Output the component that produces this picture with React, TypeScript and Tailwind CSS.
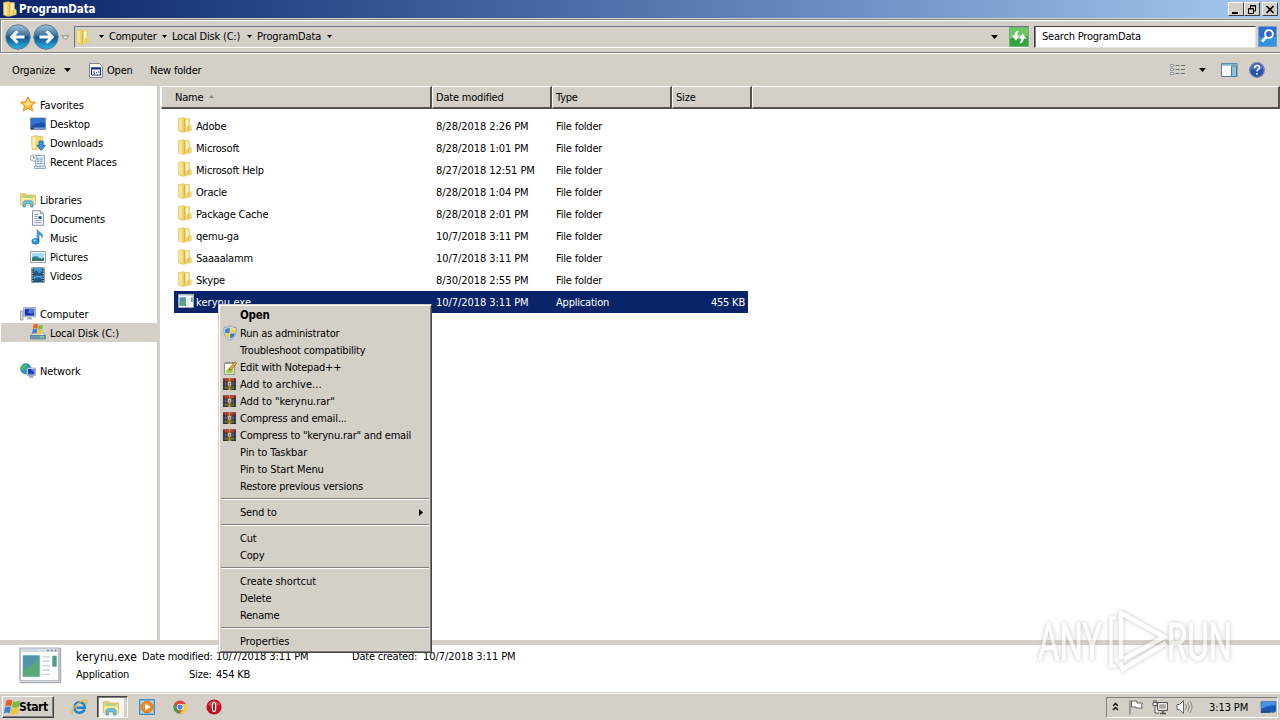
import type { ReactNode } from 'react';

type IconProps = { className?: string };

const Svg = ({ w = 16, h = 16, className = '', children }: { w?: number; h?: number; className?: string; children: ReactNode }) => (
  <svg width={w} height={h} viewBox="0 0 16 16" preserveAspectRatio="none" className={`block shrink-0 ${className}`}>
    {children}
  </svg>
);

const Folder = ({ className = '' }: IconProps) => (
  <Svg className={className}>
    <path d="M1.500 1.500L7 .600l.8.900V15L6 15.500 1.500 14z" fill="#f0d468" stroke="#dcc06a" strokeWidth=".5" />
    <path d="M7 1.500h5.500v6L14.300 9v4.500L8 15.200 6.800 14z" fill="#efd774" stroke="#dcc06a" strokeWidth=".5" />
    <path d="M2.300 2.200l2.500-.5V14l-2.500-.8z" fill="#f8e89c" />
    <path d="M9 2.500h2.300v6L9 10.500z" fill="#fcf6cd" />
    <path d="M7.500 2v12.500" stroke="#d1ae48" strokeWidth=".8" />
    <path d="M11.500 9v4.500" stroke="#dfbe57" strokeWidth="1.200" />
  </Svg>
);

const Star = () => (
  <Svg className="mb-[2px]">
    <path d="M8 .8l2.200 4.900 5.300.5-4 3.500 1.200 5.300L8 12.300 3.300 15l1.200-5.300-4-3.500 5.300-.5z" fill="#ffb92e" stroke="#e08a1e" strokeWidth=".9" />
    <path d="M8 3.500l1.300 3.300 3 .5-2.300 2L8 10 5 9 3.500 7.300l3-.4z" fill="#ffe58c" />
  </Svg>
);

const Desktop = () => (
  <Svg>
    <path d="M.5 2h15v11.500H.5z" fill="#1b4fae" stroke="#6f88ad" strokeWidth=".8" />
    <path d="M1 2.500h14V7Q8 5 1 10z" fill="#3273cf" />
    <path d="M1 11.500h14v1.700H1z" fill="#7f9fc4" />
    <path d="M1 11.500h3v1.700H1z" fill="#2b3f63" />
  </Svg>
);

const Downloads = () => (
  <Svg>
    <path d="M1.500 1.500L7 .5l.8 1h4.500V14L2 14.500z" fill="#f2d878" stroke="#d3b14e" strokeWidth=".6" />
    <path d="M2.500 2.500l2.500-.5v11.500l-2.500-.3z" fill="#fbf0b8" />
    <path d="M9 6h4.200v4.300h2.300L11.200 15.500 6.800 10.300H9z" fill="#3a94dd" stroke="#1c5ea6" strokeWidth=".7" />
  </Svg>
);

const Recent = () => (
  <Svg>
    <path d="M5 1.500h9.500v10.500H15.500v2.500H4.500V12H6z" fill="#dce8f3" stroke="#8498ad" strokeWidth=".8" />
    <path d="M7 5h6M7 7.300h6M7 9.500h6" stroke="#6e94bd" strokeWidth="1" strokeDasharray="2 .7" />
    <circle cx="3.600" cy="4" r="3.200" fill="#f5f8fa" stroke="#8494a4" strokeWidth=".8" />
    <path d="M3.600 2v2.200h1.600" fill="none" stroke="#506478" strokeWidth=".7" />
    <path d="M6 12.500h8" stroke="#8498ad" strokeWidth=".8" />
  </Svg>
);

const Library = ({ className = '', w = 16, h = 16 }: IconProps & { w?: number; h?: number }) => (
  <Svg className={className} w={w} h={h}>
    <path d="M.6 1.800h5.500l1 1.300h8.300V13H.6z" fill="#eed26a" stroke="#cfac49" strokeWidth=".7" />
    <path d="M3 3h4l1 1h5v2H3z" fill="#a9d68d" />
    <path d="M1 6h14v7H1z" fill="#f9e798" />
    <path d="M3 15v-4.500l1.500-1.700h7l1.500 1.700V15h-2.300v-3.300H5.300V15z" fill="#73c2ea" stroke="#3688bd" strokeWidth=".7" />
  </Svg>
);

const Doc = () => (
  <Svg className="mb-px">
    <path d="M2.500.700h8l3 3v11.600h-11z" fill="#f7fafd" stroke="#7288a0" strokeWidth=".9" />
    <path d="M10.500.700v3h3" fill="#d5e1ee" stroke="#7288a0" strokeWidth=".8" />
    <path d="M4.500 4.500h4M4.500 6.500h3M4.500 8.500h3M4.500 10.700h7M4.500 12.700h7" stroke="#7b95b1" strokeWidth=".9" />
    <path d="M8.500 6.200h3.200v2.800H8.500z" fill="#29578f" />
  </Svg>
);

const Music = () => (
  <Svg className="mb-px">
    <path d="M7.200.500c1 2.700 6.600 3.500 5 8.300-.4-2-1.600-3-3.200-3.300V12H7.200z" fill="#3da7e4" stroke="#1775b5" strokeWidth=".6" />
    <ellipse cx="5.500" cy="12.300" rx="3.700" ry="2.900" fill="#2d95d9" stroke="#1668a5" strokeWidth=".6" />
    <ellipse cx="4.700" cy="11.500" rx="1.500" ry="1" fill="#98d7f6" />
  </Svg>
);

const Pictures = () => (
  <Svg>
    <path d="M.6 2.500h14.800v11H.6z" fill="#fff" stroke="#7e929f" strokeWidth=".9" />
    <path d="M2 4h12v8H2z" fill="#a3dbf5" />
    <path d="M2 8.500q4-2.500 7 0t5-.500v4H2z" fill="#2d8292" />
    <path d="M2 10.500h12V12H2z" fill="#3f6d4e" />
  </Svg>
);

const Videos = () => (
  <Svg className="mb-px">
    <path d="M1.500.500h13v15h-13z" fill="#2c3946" />
    <path d="M4 1h8v6.300H4zM4 8.500h8V15H4z" fill="#3e9ad6" />
    <path d="M4 5q3-3 4 0t4-1v3.300H4zM4 12.500q4-4 8 0V15H4z" fill="#195a8c" />
    <path d="M2.800 1v14M13.200 1v14" stroke="#e8eef2" strokeWidth="1.100" strokeDasharray="1.200 1.200" />
  </Svg>
);

const Computer = () => (
  <Svg>
    <path d="M.5 5h2.500v9H.5z" fill="#d4dae1" stroke="#79869a" strokeWidth=".7" />
    <path d="M3.500 1.500h12v9.300h-12z" fill="#dce4ed" stroke="#8f9cae" strokeWidth=".8" />
    <path d="M4.700 2.700h9.600v7H4.700z" fill="#1b36ad" />
    <path d="M9 2.700h5.300v4Q11 8 8 7z" fill="#4d77df" />
    <path d="M8 11h3l1.500 2.500h-6z" fill="#aab5c2" />
  </Svg>
);

const Drive = () => (
  <Svg className="mb-px">
    <path d="M3 8h10l2.500 3.500H.5z" fill="#d5dde2" stroke="#78909b" strokeWidth=".6" />
    <path d="M.5 11.500h15V15H.5z" fill="#6a99a9" stroke="#496f7d" strokeWidth=".6" />
    <path d="M10 13h4" stroke="#8df08b" strokeWidth="1" />
    <path d="M3.500.700q2.300-1.500 4.500 0L7.300 4.800q-2.300-1.200-4.500 0z" fill="#ee6131" />
    <path d="M8.500 1q2.300 1 4.500-.2L12.200 4.900q-2.300 1.200-4.500.3z" fill="#83bd38" />
    <path d="M2.700 5.400q2.300-1.300 4.500 0L6.500 9.800q-2.300-1.300-4.500 0z" fill="#3f82d7" />
    <path d="M7.600 5.900q2.300 1 4.500-.3l-.8 4.200q-2.200 1.200-4.400.2z" fill="#f8c72f" />
  </Svg>
);

const Network = () => (
  <Svg>
    <circle cx="5.800" cy="5.800" r="5.300" fill="#2d8fd6" stroke="#2468a3" strokeWidth=".5" />
    <path d="M2 2.500q3-2.300 5 0L5 6 3 7.500.8 6zM5 8l3 1-1.500 2z" fill="#4cbd54" />
    <path d="M7 5h8.500v7.500H7z" fill="#dde5ee" stroke="#8797ab" strokeWidth=".7" />
    <path d="M8 6h6.500v5.500H8z" fill="#1d3fba" />
    <path d="M11 6h3.500v4z" fill="#6c97ef" />
    <path d="M10 12.500h2.500l1.500 2.200H8.500z" fill="#93a5bd" />
  </Svg>
);

const AppWindow = ({ w = 16, h = 14, className = '' }: IconProps & { w?: number; h?: number }) => (
  <Svg w={w} h={h} className={className}>
    <path d="M.4.500h15.200v15H.4z" fill="#fbfcfc" stroke="#a9b1b9" strokeWidth=".6" />
    <path d="M.7.800h14.600v1.500H.7z" fill="#d3dbe2" />
    <path d="M11 1.600h.6M12.500 1.600h.6M14 1.600h.6" stroke="#6b7c8c" strokeWidth=".6" />
    <path d="M1.500 3.800h6.500v9.700H1.500z" fill="#5593ad" />
    <path d="M1.500 10q4-.5 6.500-6v9.500H1.500z" fill="#58a878" />
    <path d="M9.300 4.500h2.700M9.300 6.500h2.700M9.300 8.500h2.700M9.300 10.500h2.700M9.300 12.500h2.700" stroke="#c9d1d6" strokeWidth=".6" />
    <path d="M13 4h1.700v5H13z" fill="#4f9b84" />
  </Svg>
);

const Shield = () => (
  <Svg w={14} h={16}>
    <path d="M8 .7Q5 2.600 1 2.600 0 12 8 15.500 16 12 15 2.600 11 2.600 8 .700z" fill="#d3e4f5" stroke="#7893b3" strokeWidth=".8" />
    <path d="M7.700 2.300Q5 4 2.500 4v4h5.200z" fill="#3b82d1" />
    <path d="M8.300 2.300Q11 4 13.500 4v4H8.300z" fill="#fbd044" />
    <path d="M2.500 8.400h5.200v5.300Q3 11.500 2.500 8.400z" fill="#f9cb38" />
    <path d="M13.500 8.400H8.300v5.300Q13 11.500 13.500 8.400z" fill="#3277c8" />
  </Svg>
);

const Notepad = () => (
  <Svg w={13} h={14}>
    <path d="M.7 2.500h12v12.800h-12z" fill="#fffef2" stroke="#6d7668" strokeWidth=".9" />
    <path d="M2 2h10" stroke="#666" strokeWidth="1.500" strokeDasharray="1 1" />
    <path d="M2.500 11l4-4 4.500 2v5H2.500z" fill="#a9d14b" />
    <path d="M13.500.800l2 1.700L9 10l-2.500 1 .700-2.700z" fill="#f2bb2f" stroke="#65511c" strokeWidth=".8" />
  </Svg>
);

const WinRar = () => (
  <Svg w={13} h={12} className="mr-px mb-px">
    <path d="M0 .3h16v5.200H0z" fill="#a8283f" />
    <path d="M0 5.500h16v5H0z" fill="#2c4fa0" />
    <path d="M0 10.500h16v5.200H0z" fill="#1f7a40" />
    <path d="M0 5.300h16M0 10.500h16M0 15.500h16" stroke="#14202b" strokeWidth="1.200" />
    <path d="M1 1v4M14.500 1v4M1 6v4M14.500 6v4M1 11v4M14.500 11v4" stroke="#26303a" strokeWidth="1.200" />
    <path d="M3.200 1v4M12.500 1v4M3.200 6v4M12.500 6v4M3.200 11v4M12.500 11v4" stroke="#cf5348" strokeWidth=".9" />
    <path d="M5.500 0h5v16h-5z" fill="#a4602a" />
    <path d="M5.500 5h5v5.500h-5z" fill="#f0e4b6" stroke="#453019" strokeWidth=".8" />
    <path d="M7 6.500h2.200V9H7z" fill="#7d7260" />
    <path d="M8 0v5M8 11v5" stroke="#e9c157" strokeWidth="1.300" strokeDasharray="1 1" />
  </Svg>
);

const Flag4 = () => (
  <Svg w={18} h={17}>
    <path d="M3 1.500q2.700-1.800 5.200 0L7.200 7q-2.500-1.700-5.200 0z" fill="#ea5a2c" />
    <path d="M8.900 2q2.700 1.500 6.400-.5L14 7.200q-3 1.800-6.100.4z" fill="#7dba35" />
    <path d="M1.800 7.900q2.700-1.700 5.200 0l-1 5.700q-2.500-1.700-5.200 0z" fill="#3d83da" />
    <path d="M7.700 8.400q3 1.500 6.100-.3L12.500 13.700q-2.800 1.800-5.800.4z" fill="#f8c42c" />
  </Svg>
);

const NavOrb = ({ flip = false }: { flip?: boolean }) => (
  <svg width="26" height="26" viewBox="0 0 26 26" className={`mt-[2px] block shrink-0 ${flip ? '-scale-x-100' : ''}`}>
    <defs>
      <linearGradient id={flip ? 'orbF' : 'orbB'} x1="0" y1="0" x2="0" y2="1">
        <stop offset="0" stopColor="#a4bfd2" />
        <stop offset=".42" stopColor="#3b78a3" />
        <stop offset=".5" stopColor="#0f5388" />
        <stop offset="1" stopColor="#2db4ea" />
      </linearGradient>
    </defs>
    <circle cx="13" cy="13" r="12.200" fill={flip ? 'url(#orbF)' : 'url(#orbB)'} stroke="#587d97" strokeWidth="1" />
    <path d="M12.500 7.300L6.800 13l5.700 5.700M7 13h12.500" fill="none" stroke="#fff" strokeWidth="2.900" />
  </svg>
);

const Down = ({ className = '' }: IconProps) => (
  <svg width="7" height="4" viewBox="0 0 7 4" className={`block shrink-0 ${className}`}>
    <path d="M0 0h7L3.500 4z" fill="#000" />
  </svg>
);

const TinyDown = ({ className = '' }: IconProps) => (
  <svg width="5" height="3" viewBox="0 0 5 3" className={`block shrink-0 ${className}`}>
    <path d="M0 0h5L2.500 3z" fill="#000" />
  </svg>
);

const navGroups: { label: string; icon: ReactNode; items: { label: string; icon: ReactNode; active?: boolean }[] }[] = [
  {
    label: 'Favorites',
    icon: <Star />,
    items: [
      { label: 'Desktop', icon: <Desktop /> },
      { label: 'Downloads', icon: <Downloads /> },
      { label: 'Recent Places', icon: <Recent /> },
    ],
  },
  {
    label: 'Libraries',
    icon: <Library />,
    items: [
      { label: 'Documents', icon: <Doc /> },
      { label: 'Music', icon: <Music /> },
      { label: 'Pictures', icon: <Pictures /> },
      { label: 'Videos', icon: <Videos /> },
    ],
  },
  { label: 'Computer', icon: <Computer />, items: [{ label: 'Local Disk (C:)', icon: <Drive />, active: true }] },
  { label: 'Network', icon: <Network />, items: [] },
];

const files = [
  ['Adobe', '8/28/2018 2:26 PM'],
  ['Microsoft', '8/28/2018 1:01 PM'],
  ['Microsoft Help', '8/27/2018 12:51 PM'],
  ['Oracle', '8/28/2018 1:04 PM'],
  ['Package Cache', '8/28/2018 2:01 PM'],
  ['qemu-ga', '10/7/2018 3:11 PM'],
  ['Saaaalamm', '10/7/2018 3:11 PM'],
  ['Skype', '8/30/2018 2:55 PM'],
];

const Caption = ({ children }: { children: ReactNode }) => (
  <div className="flex h-[14px] w-4 items-center justify-center border border-t-white border-r-[#404040] border-b-[#404040] border-l-white bg-[#d4d0c8]">
    {children}
  </div>
);

const TitleBar = () => (
  <div className="flex h-[18px] shrink-0 items-center bg-linear-to-r from-[#0a246a] to-[#a6caf0] pr-[2px] pl-[2px]">
    <Folder />
    <span className="ml-px grow text-[11.5px] font-bold tracking-[-0.1px] text-white">ProgramData</span>
    <div className="flex">
      <Caption>
        <svg width="10" height="9"><path d="M1 8h6" stroke="#000" strokeWidth="2" /></svg>
      </Caption>
      <Caption>
        <svg width="10" height="9"><path d="M3.500 3V.500h5V6H6.500M3 1h6M1.500 3.500h5v5h-5zM1 4h6" fill="none" stroke="#000" /></svg>
      </Caption>
      <div className="w-[2px]" />
      <Caption>
        <svg width="10" height="9"><path d="M1.500 1l7 7M8.500 1l-7 7" stroke="#000" strokeWidth="1.600" /></svg>
      </Caption>
    </div>
  </div>
);

const AddressBar = () => (
  <div className="flex h-[36px] shrink-0 flex-col pt-px">
    <div className="flex h-[34px] items-center border-t border-b border-l border-[#808080] pl-[4px] shadow-[inset_1px_1px_0_#fff,0_1px_0_#fff]">
      <NavOrb />
      <div className="w-[2px]" />
      <NavOrb flip />
      <svg width="9" height="6" className="mt-[3px] mr-[4px] ml-[2px] block shrink-0"><path d="M.8.800h7L4.300 4.800z" fill="#eee" stroke="#8c8c80" /></svg>
      <div className="mt-px flex h-[22px] grow items-center border-t border-b border-l border-t-[#697580] border-b-white border-l-[#697580] [&>span]:pt-px">
        <Folder />
        <TinyDown className="mr-[5px] ml-[8px]" />
        <span className="w-[47px]">Computer</span>
        <TinyDown className="mr-[5px] ml-[6px]" />
        <span className="w-[69px]">Local Disk (C:)</span>
        <TinyDown className="mr-[5px] ml-[6px]" />
        <span className="w-[63px] tracking-[-0.1px]">ProgramData</span>
        <TinyDown className="ml-[7px]" />
        <div className="grow" />
        <Down className="mr-[11px]" />
        <svg width="20" height="20" viewBox="0 0 20 20" className="block shrink-0">
          <path d="M.5.500h19v19H.5z" fill="#2fa53a" stroke="#7cad7c" />
          <path d="M1 1h18v8Q9 8 1 12z" fill="#69c764" />
          <path d="M10 4Q6 3.500 5.300 8.500H2.500l4.500 5 4-5H8.200Q8 5.500 10 4z" fill="#fff" />
          <path d="M10.500 16.500q4-.5 4.300-5h2.900l-4.200-5-4.200 5H12q.2 3-1.500 5z" fill="#fff" />
        </svg>
      </div>
      <div className="mt-px ml-[5px] flex h-[22px] w-[222px] items-center border border-t-[#404040] border-r-[#e5e2dc] border-b-[#e5e2dc] border-l-[#404040] bg-white pl-[7px] shadow-[inset_1px_0_0_#808080]">
        <span className="pt-px">Search ProgramData</span>
      </div>
      <svg width="19" height="21" viewBox="0 0 19 21" className="mt-px mr-[3px] ml-[2px] block shrink-0">
        <path d="M.5.500h18v20H.5z" fill="#2f6cd2" stroke="#7c9cc8" />
        <path d="M1 11h17v9H1z" fill="#36a2e4" opacity=".7" />
        <path d="M8.800 10.500L4 15.500" stroke="#fff" strokeWidth="2.600" />
        <circle cx="11" cy="8" r="3.900" fill="#3c62c4" stroke="#fff" strokeWidth="1.900" />
      </svg>
    </div>
  </div>
);

const CommandBar = () => (
  <div className="flex h-8 shrink-0 items-center pl-[12px] [&>span]:pt-[2px]">
    <span className="w-[44px] tracking-[-0.15px]">Organize</span>
    <Down className="mr-[18px] ml-2" />
    <svg width="14" height="15" viewBox="0 0 14 15" className="mr-1 block shrink-0">
      <path d="M.5.500h10l3 3v11H.5z" fill="#f8fafd" stroke="#7c8796" />
      <path d="M2.500 5h9v7h-9z" fill="#fff" stroke="#1a2d87" />
      <path d="M2 5.500h10" stroke="#1a2d87" strokeWidth="2" />
      <path d="M4 9h2M7 9.500h1M9 9h1.500M5 10.500h1" stroke="#1a2d87" />
    </svg>
    <span className="w-[43px]">Open</span>
    <span>New folder</span>
    <div className="grow" />
    <svg width="16" height="12" viewBox="0 0 16 12" className="block shrink-0">
      <path d="M.5.500h3v2h-3zM.5 4.500h3v2h-3zM.5 8.500h3v2h-3z" fill="#fff" stroke="#8793a0" strokeWidth=".9" />
      <path d="M5.500 1.500h4M11 1.500h4M5.500 5.500h4M11 5.500h4M5.500 9.500h4M11 9.500h4" stroke="#69737d" />
    </svg>
    <Down className="mr-[15px] ml-[13px]" />
    <svg width="17" height="14" viewBox="0 0 17 14" className="mr-[11px] block shrink-0">
      <path d="M.5.500h15.500v13H.5z" fill="#fff" stroke="#507c9c" />
      <path d="M1 1.700h15" stroke="#7eb4d1" strokeWidth="2" />
      <path d="M10.500 3h5v10.500h-5z" fill="#88c5e1" stroke="#507c9c" />
    </svg>
    <svg width="16" height="16" viewBox="0 0 16 16" className="mr-[15px] block shrink-0">
      <circle cx="8" cy="8" r="7.300" fill="#2750b4" stroke="#7085ad" strokeWidth="1.300" />
      <path d="M2 7a6 5 0 0 1 12 0Q8 9 2 7z" fill="#688be0" opacity=".6" />
      <path d="M5.600 6q.2-2.500 2.500-2.500T10.500 5.700Q10.500 7 9 7.600 8 8.200 8 9.500M8 10.900v1.900" fill="none" stroke="#fff" strokeWidth="1.600" />
    </svg>
  </div>
);

const Sidebar = () => (
  <div className="flex w-[157px] shrink-0 flex-col gap-[19px] pt-[9px]">
    {navGroups.map((g) => (
      <div key={g.label}>
        <div className="flex h-[19px] items-center pl-[20px]">
          {g.icon}
          <span className="ml-1 pt-[2px] tracking-[-0.1px]">{g.label}</span>
        </div>
        {g.items.map((i) => (
          <div key={i.label} className={`ml-px flex h-[19px] items-center pl-[29px] ${i.active ? 'bg-[#d4d0c8]' : ''}`}>
            {i.icon}
            <span className="ml-1 pt-[2px] tracking-[-0.15px]">{i.label}</span>
          </div>
        ))}
      </div>
    ))}
  </div>
);

const Head = ({ className, children }: { className: string; children?: ReactNode }) => (
  <div className={`flex items-center border-t border-r-2 border-b-2 border-l border-t-white border-r-[#55534f] border-b-[#55534f] border-l-white bg-[#d4d0c8] pt-[2px] ${className}`}>
    {children}
  </div>
);

const FileList = () => (
  <div className="flex grow flex-col pl-px">
    <div className="flex h-[23px] shrink-0">
      <Head className="w-[271px] pl-[13px]">
        Name
        <svg width="5" height="3" className="mb-[4px] ml-[6px] block"><path d="M0 3h5L2.500 0z" fill="#85827c" /></svg>
      </Head>
      <Head className="w-[120px] pl-[3px]">Date modified</Head>
      <Head className="w-[120px] pl-[3px]">Type</Head>
      <Head className="w-[80px] pl-[3px]">Size</Head>
      <Head className="grow" />
    </div>
    <div className="mt-[6px] ml-[13px] flex w-[574px] flex-col">
      {files.map(([name, date]) => (
        <div key={name} className="flex h-[22px] items-center pl-[3px] [&>span]:pt-[2px]">
          <Folder className="mb-[2px]" />
          <span className="ml-[3px] w-[240px]">{name}</span>
          <span className="w-[120px] tracking-[-0.07px]">{date}</span>
          <span>File folder</span>
        </div>
      ))}
      <div className="flex h-[22px] items-center bg-[#0a246a] pr-[3px] pl-1 text-white [&>span]:pt-[2px]">
        <AppWindow className="mb-[2px]" />
        <span className="ml-[2px] w-[240px] tracking-[0.05px]">kerynu.exe</span>
        <span className="w-[120px] tracking-[-0.07px]">10/7/2018 3:11 PM</span>
        <span className="grow">Application</span>
        <span>455 KB</span>
      </div>
    </div>
  </div>
);

const Item = ({ icon, children, tall }: { icon?: ReactNode; children: ReactNode; tall?: boolean }) => (
  <div className={`flex items-center ${tall ? 'h-[18px]' : 'h-[17px]'}`}>
    <div className="flex w-[20px] shrink-0 justify-center">{icon}</div>
    {children}
  </div>
);

const Rule = () => <div className="mt-[3px] mr-[2px] mb-1 ml-px h-[2px] border-t border-b border-t-[#808080] border-b-white" />;

const ContextMenu = () => (
  <div className="absolute top-[304px] left-[218px] h-[349px] w-[214px] border border-t-[#d4d0c8] border-r-[#404040] border-b-[#404040] border-l-[#d4d0c8] bg-[#d4d0c8] pt-px pl-px shadow-[inset_1px_1px_0_#fff,inset_-1px_-1px_0_#808080]">
    <Item tall><span className="text-[11.500px] font-bold">Open</span></Item>
    <Item tall icon={<Shield />}><span className="pt-px">Run as administrator</span></Item>
    <Item>Troubleshoot compatibility</Item>
    <Item icon={<Notepad />}>Edit with Notepad++</Item>
    <Item icon={<WinRar />}><span className="tracking-[0.03px]">Add to archive...</span></Item>
    <Item icon={<WinRar />}><span className="tracking-[-0.05px]">Add to "kerynu.rar"</span></Item>
    <Item icon={<WinRar />}>Compress and email...</Item>
    <Item icon={<WinRar />}>Compress to "kerynu.rar" and email</Item>
    <Item><span className="tracking-[-0.1px]">Pin to Taskbar</span></Item>
    <Item><span className="tracking-[-0.1px]">Pin to Start Menu</span></Item>
    <Item><span className="tracking-[-0.18px]">Restore previous versions</span></Item>
    <Rule />
    <Item>
      <span className="grow">Send to</span>
      <svg width="4" height="7" className="mr-[8px] block"><path d="M0 0v7l4-3.500z" /></svg>
    </Item>
    <Rule />
    <Item>Cut</Item>
    <Item>Copy</Item>
    <Rule />
    <Item><span className="tracking-[-0.07px]">Create shortcut</span></Item>
    <Item>Delete</Item>
    <Item>Rename</Item>
    <Rule />
    <Item><span className="tracking-[-0.05px]">Properties</span></Item>
  </div>
);

const Details = () => (
  <div className="box-content flex h-[47px] shrink-0 border-t-[5px] border-[#d4d0c8] bg-white pl-[19px]">
    <AppWindow w={41} h={35} className="mt-[2px] shadow-[1px_1px_1px_#aaa]" />
    <div className="flex flex-col pt-[3px] pl-[16px]">
      <div className="flex h-[18px] items-center">
        <span className="w-[66px] text-[12px] tracking-[0.15px]">kerynu.exe</span>
        <span className="w-[74px]">Date modified:</span>
        <span className="w-[136px] tracking-[-0.07px]">10/7/2018 3:11 PM</span>
        <span className="w-[71px]">Date created:</span>
        <span className="tracking-[-0.07px]">10/7/2018 3:11 PM</span>
      </div>
      <div className="flex h-[18px] items-center">
        <span className="w-[113px]">Application</span>
        <span className="w-[27px]">Size:</span>
        <span>454 KB</span>
      </div>
    </div>
  </div>
);

const Taskbar = () => (
  <div className="flex h-[28px] shrink-0 items-center border-t border-[#d4d0c8] pt-px shadow-[inset_0_1px_0_#fff]">
    <div className="ml-[2px] flex h-[22px] w-[52px] items-center border border-t-white border-r-[#404040] border-b-[#404040] border-l-white shadow-[inset_-1px_-1px_0_#808080]">
      <Flag4 />
      <span className="-ml-[2px] text-[12px] font-bold tracking-[-0.4px]">Start</span>
    </div>
    <svg width="17" height="16" viewBox="0 0 17 16" className="mr-[9px] ml-[17px] block shrink-0">
      <path d="M13.500 10.500Q12 13.700 8.500 13.700 3.500 13.500 3.500 8.500 4 3.500 8.500 3.300 13.600 3.500 13.700 8.700H5.500" fill="none" stroke="#1f83d0" strokeWidth="2.500" />
      <path d="M1.500 15Q-.5 12 5 6.500 12 .200 15.500 1.200q1.300 1-.8 4.300" fill="none" stroke="#e5b82d" strokeWidth="1.400" />
    </svg>
    <div className="flex h-[22px] w-[31px] items-center justify-center border border-t-[#404040] border-r-white border-b-white border-l-[#404040] bg-[#f6f5f2] shadow-[inset_1px_1px_0_#808080,inset_-3px_0_0_#d4d0c8]">
      <Library className="mt-[2px] mr-[3px]" />
    </div>
    <svg width="16" height="16" viewBox="0 0 16 16" className="ml-[11px] block shrink-0">
      <path d="M.5.500h15v15H.5z" fill="#83b8dc" stroke="#5288b8" />
      <path d="M2 2h12v12H2z" fill="#b7d8ec" />
      <circle cx="8" cy="8" r="5.700" fill="#f28a1c" stroke="#db6f0e" />
      <path d="M6 4.500l5.500 3.500L6 11.500z" fill="#fff" />
    </svg>
    <svg width="14" height="14" viewBox="0 0 16 16" className="mr-px ml-[18px] block shrink-0">
      <circle cx="8" cy="8" r="7.500" fill="#e54535" />
      <path d="M1.500 4.300L5 11l3 4.500A7.500 7.500 0 0 1 1.500 4.300z" fill="#35a553" />
      <path d="M8 15.500L11.200 9.500 9 4.500h6.500A7.500 7.500 0 0 1 8 15.500z" fill="#f9cb38" />
      <circle cx="8" cy="8" r="3.700" fill="#fff" />
      <circle cx="8" cy="8" r="2.900" fill="#4386ee" />
    </svg>
    <svg width="16" height="16" viewBox="0 0 16 16" className="ml-[18px] block shrink-0">
      <circle cx="8" cy="8" r="7.600" fill="#c2131c" />
      <path d="M2 6a6.500 6 0 0 1 12 0Q8 7 2 6z" fill="#e65a5c" opacity=".7" />
      <ellipse cx="8" cy="8" rx="2.300" ry="5.200" fill="#fff" />
      <ellipse cx="8" cy="8" rx="1" ry="4" fill="#a50d16" />
    </svg>
    <div className="grow" />
    <div className="mr-[2px] flex h-[21px] w-[172px] items-center border border-t-[#808080] border-r-white border-b-white border-l-[#808080]">
      <svg width="7" height="9" viewBox="0 0 7 9" className="mb-[2px] ml-[5px] block shrink-0"><path d="M1 4l2.500-2.500L6 4M1 8l2.500-2.500L6 8" fill="none" stroke="#000" strokeWidth="1.300" /></svg>
      <svg width="16" height="16" viewBox="0 0 16 16" className="ml-[9px] block shrink-0">
        <path d="M2 1v14.500M3.500 2h5.500v2h5.500q-2 2.500-.2 5H8V8H3.500z" fill="#fff" stroke="#6a6864" strokeWidth="1" />
      </svg>
      <svg width="17" height="16" viewBox="0 0 17 16" className="ml-[8px] block shrink-0">
        <path d="M5.500 3.500h10v8h-10z" fill="#a9a7a2" stroke="#55534f" />
        <path d="M6.700 4.700h7.600v5.600H6.700z" fill="none" stroke="#fff" />
        <path d="M8 14.500h6M11 12v2" stroke="#55534f" strokeWidth="1.500" />
        <path d="M1 3.500h4v3H1zM2 1v2M4 1v2M3 6.500V14h4" fill="#fff" stroke="#55534f" />
      </svg>
      <svg width="17" height="16" viewBox="0 0 17 16" className="ml-[7px] block shrink-0">
        <path d="M1 5.500h2.500L7.500 1.500v13L3.500 10.500H1z" fill="#fff" stroke="#6a6864" />
        <path d="M9.500 5q2 3 0 6M11.800 3.500q3 4.500 0 9M14 2q4 6 0 12" fill="none" stroke="#8c8984" />
      </svg>
      <span className="ml-[16px] w-[51px] pt-px tracking-[-0.1px]">3:13 PM</span>
      <svg width="17" height="13" viewBox="0 0 17 13" className="block shrink-0">
        <path d="M1 .500h15v9.800q-2 2-5 1H1z" fill="#1b58b8" stroke="#5577a5" strokeWidth=".7" />
        <path d="M1.500 1h14v3Q8 4 1.500 8z" fill="#4a92e6" />
        <path d="M1 11h9" stroke="#26426c" strokeWidth="1.500" />
      </svg>
    </div>
  </div>
);

const Watermark = () => (
  <svg width="220" height="80" viewBox="0 0 220 80" className="pointer-events-none absolute top-[602px] left-[1030px] opacity-60 drop-shadow-[0_0_2px_#9a9a9a]">
    <g fill="#fff" stroke="#fff" strokeWidth=".8" className="font-['Roboto'] text-[52px] tracking-normal">
      <text x="8" y="58" textLength="64" lengthAdjust="spacingAndGlyphs">ANY</text>
      <text x="137" y="58" textLength="65" lengthAdjust="spacingAndGlyphs">RUN</text>
    </g>
    <g fill="none" stroke="#fff" strokeWidth="4.500">
      <path d="M91 57V11l43 24L94 57" />
      <path d="M86 16h-5v48h5" strokeWidth="3.500" />
      <path d="M90 61l3 6 43-26" />
    </g>
  </svg>
);

export default function App() {
  return (
    <div className="relative flex h-[720px] w-[1280px] flex-col overflow-hidden bg-[#d4d0c8] font-['DejaVu_Sans_Condensed','DejaVu_Sans',sans-serif] text-[11px] leading-[14px] tracking-[-0.2px] whitespace-nowrap text-black">
      <TitleBar />
      <AddressBar />
      <CommandBar />
      <div className="flex min-h-0 grow bg-white">
        <Sidebar />
        <div className="w-[3px] shrink-0 bg-[#d4d0c8]" />
        <FileList />
      </div>
      <Details />
      <Taskbar />
      <ContextMenu />
      <Watermark />
    </div>
  );
}
